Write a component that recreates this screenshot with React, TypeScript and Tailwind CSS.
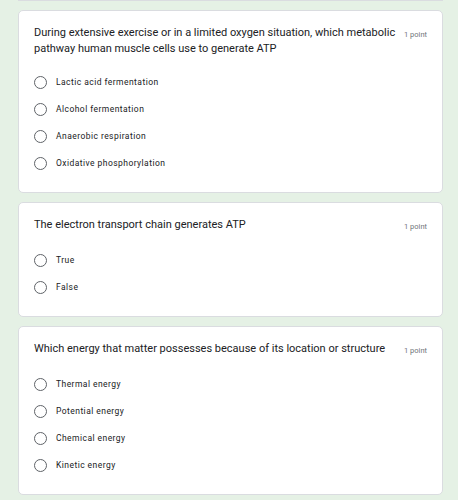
const QUESTIONS = [
  {
    title:
      "During extensive exercise or in a limited oxygen situation, which metabolic pathway human muscle cells use to generate ATP",
    options: [
      "Lactic acid fermentation",
      "Alcohol fermentation",
      "Anaerobic respiration",
      "Oxidative phosphorylation",
    ],
  },
  {
    title: "The electron transport chain generates ATP",
    options: ["True", "False"],
  },
  {
    title: "Which energy that matter possesses because of its location or structure",
    options: ["Thermal energy", "Potential energy", "Chemical energy", "Kinetic energy"],
  },
];

function Question({ title, options }: { title: string; options: string[] }) {
  return (
    <div className="rounded-[5px] border border-[#dadce0] bg-white pl-[15px] pr-[15px] pt-[14px] pb-[15px]">
      <div className="flex items-start justify-between gap-[6px]">
        <div className="text-[11px] leading-[16px] text-[#202124]">{title}</div>
        <div className="shrink-0 pt-[2px] text-[7.5px] leading-[16px] text-[#70757a]">1 point</div>
      </div>
      <div className="mt-[12px] flex flex-col">
        {options.map((o) => (
          <label key={o} className="flex h-[27px] items-center gap-[9px]">
            <span className="h-[13px] w-[13px] shrink-0 rounded-full border-[1.5px] border-[#5f6368]" />
            <span className="text-[8.5px] tracking-[0.45px] text-[#202124]">{o}</span>
          </label>
        ))}
      </div>
    </div>
  );
}

export default function App() {
  return (
    <div
      className="min-h-[500px] w-[458px] bg-[#e5f1e5] pl-[18px] pr-[15px]"
      style={{ fontFamily: "Roboto, 'Liberation Sans', sans-serif" }}
    >
      <div className="flex flex-col gap-[9px]">
        {/* tail of the previous card */}
        <div className="h-[1px] border-x border-b border-[#dadce0] bg-white" />
        {QUESTIONS.map((q) => (
          <Question key={q.title} {...q} />
        ))}
      </div>
    </div>
  );
}
